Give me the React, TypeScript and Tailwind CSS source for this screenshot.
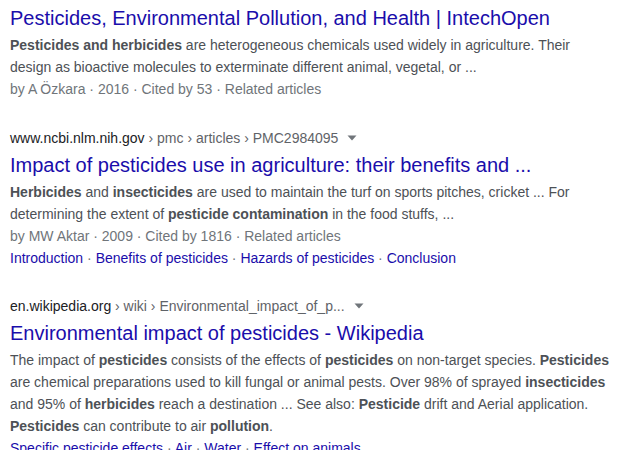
import React from "react";

const Dot = () => <span className="text-[#70757a]"> · </span>;

function Arrow() {
  return (
    <svg width="10" height="6" viewBox="0 0 10 6" className="inline-block ml-[9px] mb-[2px]">
      <path d="M0.5 0.5 L9.5 0.5 L5 5.5 Z" fill="#70757a" />
    </svg>
  );
}

function UrlLine({ domain, rest }: { domain: string; rest: string }) {
  return (
    <div className="text-[14px] leading-[22px] text-[#202124]">
      {domain}
      <span className="text-[#5f6368]">{rest}</span>
      <Arrow />
    </div>
  );
}

function Title({ children }: { children: React.ReactNode }) {
  return <div className="text-[20px] leading-[26px] text-[#1a0dab] mt-[3px]">{children}</div>;
}

function Links({ items }: { items: string[] }) {
  return (
    <div className="text-[14px] leading-[22px] text-[#1a0dab] whitespace-nowrap">
      {items.map((t, i) => (
        <React.Fragment key={t}>
          {i > 0 && <Dot />}
          <span>{t}</span>
        </React.Fragment>
      ))}
    </div>
  );
}

export default function App() {
  return (
    <div
      className="w-[627px] h-[450px] overflow-hidden bg-white pl-[10px] pt-[5px]"
      style={{ fontFamily: '"Liberation Sans", Arial, sans-serif' }}
    >
      {/* Result 1 */}
      <div className="text-[20px] leading-[26px] text-[#1a0dab]">
        Pesticides, Environmental Pollution, and Health | IntechOpen
      </div>
      <div className="mt-[3px] text-[14px] leading-[22px] text-[#4d5156] whitespace-nowrap">
        <b>Pesticides and herbicides</b> are heterogeneous chemicals used widely in agriculture. Their
        <br />
        design as bioactive molecules to exterminate different animal, vegetal, or ...
        <br />
        <span className="text-[#70757a]">by A Özkara · 2016 · Cited by 53 · Related articles</span>
      </div>

      {/* Result 2 */}
      <div className="mt-[27px]">
        <UrlLine domain="www.ncbi.nlm.nih.gov" rest=" › pmc › articles › PMC2984095" />
        <Title>Impact of pesticides use in agriculture: their benefits and ...</Title>
        <div className="mt-[3px] text-[14px] leading-[22px] text-[#4d5156] whitespace-nowrap">
          <b>Herbicides</b> and <b>insecticides</b> are used to maintain the turf on sports pitches, cricket ... For
          <br />
          determining the extent of <b>pesticide contamination</b> in the food stuffs, ...
          <br />
          <span className="text-[#70757a]">by MW Aktar · 2009 · Cited by 1816 · Related articles</span>
        </div>
        <Links items={["Introduction", "Benefits of pesticides", "Hazards of pesticides", "Conclusion"]} />
      </div>

      {/* Result 3 */}
      <div className="mt-[26px]">
        <UrlLine domain="en.wikipedia.org" rest=" › wiki › Environmental_impact_of_p..." />
        <Title>Environmental impact of pesticides - Wikipedia</Title>
        <div className="mt-[3px] text-[14px] leading-[22px] text-[#4d5156] whitespace-nowrap">
          The impact of <b>pesticides</b> consists of the effects of <b>pesticides</b> on non-target species. <b>Pesticides</b>
          <br />
          are chemical preparations used to kill fungal or animal pests. Over 98% of sprayed <b>insecticides</b>
          <br />
          and 95% of <b>herbicides</b> reach a destination ... See also: <b>Pesticide</b> drift and Aerial application.
          <br />
          <b>Pesticides</b> can contribute to air <b>pollution</b>.
        </div>
        <Links items={["Specific pesticide effects", "Air", "Water", "Effect on animals"]} />
      </div>
    </div>
  );
}
